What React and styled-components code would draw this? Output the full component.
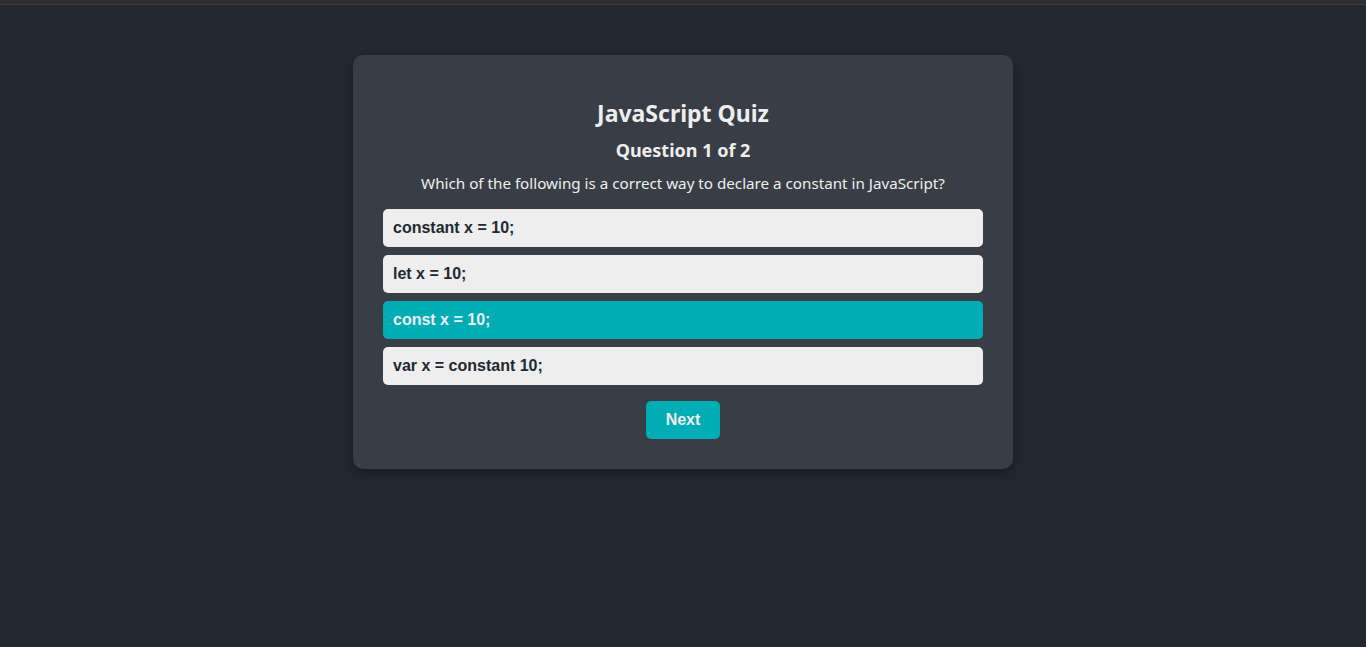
import React, { useState } from "react";
import styled, { createGlobalStyle, css } from "styled-components";

const GlobalStyle = createGlobalStyle`
  * {
    box-sizing: border-box;
  }
  body {
    margin: 0;
    background: #222831;
    font-family: "Noto Sans", "Open Sans", sans-serif;
    color: #eeeeee;
  }
`;

const TopStrip = styled.div`
  height: 5px;
  background: #2e2e2e;
  border-bottom: 1px solid #3d3c36;
`;

const Page = styled.div`
  min-height: 642px;
  display: flex;
  justify-content: center;
  align-items: flex-start;
  padding-top: 50px;
`;

const Card = styled.div`
  width: 660px;
  background: #393e46;
  border-radius: 10px;
  padding: 30px;
  box-shadow: 0 4px 10px rgba(0, 0, 0, 0.3);
  text-align: center;
`;

const Title = styled.h1`
  margin: 12px 0 0;
  font-size: 23px;
  line-height: 32px;
  font-weight: 700;
`;

const Counter = styled.h2`
  margin: 9px 0 0;
  font-size: 18px;
  line-height: 24px;
  font-weight: 700;
`;

const QuestionText = styled.p`
  margin: 11px 0 16px;
  font-size: 15.2px;
  line-height: 20px;
`;

const Options = styled.div`
  display: flex;
  flex-direction: column;
  gap: 8px;
`;

const Option = styled.button`
  height: 38px;
  width: 100%;
  border: none;
  border-radius: 5px;
  padding: 0 10px;
  text-align: left;
  font-family: "Liberation Sans", Arial, sans-serif;
  font-size: 16px;
  font-weight: 700;
  cursor: pointer;
  background: #eeeeee;
  color: #222831;
  ${(props) =>
    props.selected &&
    css`
      background: #00adb5;
      color: #eeeeee;
    `}
`;

const NextButton = styled.button`
  margin-top: 16px;
  height: 38px;
  width: 74px;
  border: none;
  border-radius: 5px;
  background: #00adb5;
  color: #eeeeee;
  font-family: "Liberation Sans", Arial, sans-serif;
  font-size: 16px;
  font-weight: 700;
  cursor: pointer;
`;

const options = [
  "constant x = 10;",
  "let x = 10;",
  "const x = 10;",
  "var x = constant 10;",
];

const App = () => {
  const [selected, setSelected] = useState(2);

  return (
    <>
      <GlobalStyle />
      <TopStrip />
      <Page>
        <Card>
          <Title>JavaScript Quiz</Title>
          <Counter>Question 1 of 2</Counter>
          <QuestionText>
            Which of the following is a correct way to declare a constant in
            JavaScript?
          </QuestionText>
          <Options>
            {options.map((item, index) => (
              <Option
                key={index}
                selected={selected === index}
                onClick={() => setSelected(index)}
              >
                {item}
              </Option>
            ))}
          </Options>
          <NextButton>Next</NextButton>
        </Card>
      </Page>
    </>
  );
};

export default App;
